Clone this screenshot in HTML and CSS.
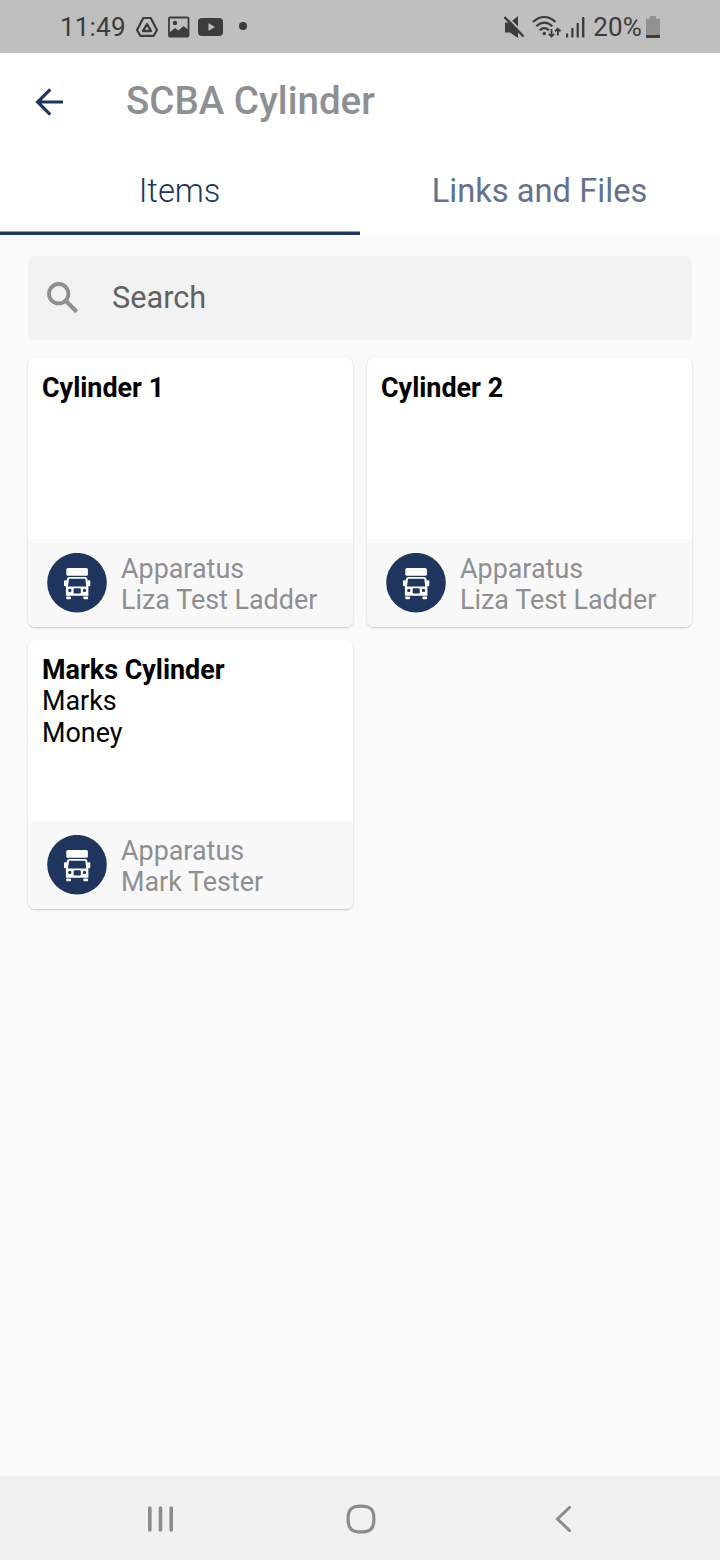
FILE: index.html
```html
<!DOCTYPE html>
<html lang="en">
<head>
  <meta charset="UTF-8" />
  <meta name="viewport" content="width=device-width, initial-scale=1.0" />
  <title>SCBA Cylinder</title>
  <link rel="stylesheet" href="styles.css">
</head>
<body>
  <!-- truck icon shared by the cards -->
  <svg class="defs" width="0" height="0">
    <symbol id="truck" viewBox="0 0 60 60">
      <circle cx="30" cy="29.700" r="29.800" fill="#20355e" />
      <g fill="#fff">
        <rect x="19.300" y="15" width="21.600" height="7.800" rx="1.500" />
        <rect x="17" y="27.200" width="3" height="6" rx="1" />
        <rect x="40.300" y="27.200" width="3" height="6" rx="1" />
        <path fill-rule="evenodd" d="M22.500 23.900h15.300c1.500 0 2.400.7 2.600 2.100l1 8.500v8.200H18.900v-8.200l1-8.500c.2-1.400 1.100-2.100 2.600-2.100zM23 25.700c-.7 0-1 .3-1.100 1l-.9 6.900h18.300l-.9-6.900c-.1-.7-.4-1-1.100-1zM22.800 35.700a1.700 1.700 0 1 0 0 3.400 1.700 1.700 0 0 0 0-3.400zM37.500 35.700a1.700 1.700 0 1 0 0 3.400 1.700 1.700 0 0 0 0-3.400zM27.300 35.200l-.7.7v4l.7.700h5.800l.7-.7v-4l-.7-.7z" />
        <rect x="19.200" y="43.500" width="4.800" height="2.800" rx="1" />
        <rect x="36.300" y="43.500" width="4.800" height="2.800" rx="1" />
      </g>
    </symbol>
  </svg>

  <div class="status-bar">
    <div class="status-left">
      <span class="time">11:49</span>
      <svg class="drive" width="24" height="24" viewBox="0 0 24 24" fill="none" stroke="#3c3c3c" stroke-linejoin="round">
        <path d="M8.300 3h7.400L22 15l-3.300 5.800H5.300L2 15z" stroke-width="2.200" />
        <path d="M12 9l4 7H8z" stroke-width="2.400" />
      </svg>
      <svg class="image" width="22" height="22" viewBox="0 0 22 22">
        <rect x="1" y="1.500" width="19.500" height="19" rx="1" fill="none" stroke="#3c3c3c" stroke-width="1.800" />
        <circle cx="7" cy="7" r="2.200" fill="#3c3c3c" />
        <path d="M2 16l5-4 3.500 2.500 5-4.500 5 4v7H2z" fill="#3c3c3c" />
      </svg>
      <svg class="youtube" width="26" height="20" viewBox="0 0 26 20">
        <rect x="0" y="1" width="25" height="18" rx="4" fill="#3c3c3c" />
        <path d="M10.500 6.300v7.400l6.500-3.700z" fill="#bfbfbf" />
      </svg>
      <span class="dot"></span>
    </div>
    <div class="status-right">
      <svg class="mute" width="22" height="24" viewBox="0 0 22 24">
        <path d="M1 7.500h5l8-6.500v22L6 17.500H1z" fill="#3c3c3c" />
        <path d="M1.500.500L22 21" stroke="#bfbfbf" stroke-width="2" />
        <path d="M.500 2L19.500 21.500" stroke="#3c3c3c" stroke-width="2.400" />
      </svg>
      <svg class="wifi" width="30" height="24" viewBox="0 0 30 24" fill="none" stroke="#3c3c3c" stroke-width="2.200">
        <path d="M1 7C8 .300 16.500.300 23.500 7M4.300 11.300c5.200-4.700 10.800-4.700 16 0M7.700 15.200c3-2.700 6.200-2.700 9.200 0" />
        <circle cx="12.300" cy="18.500" r="1.700" fill="#3c3c3c" stroke="none" />
        <path d="M19.500 14v7.500M16.800 18.800l2.700 2.700 2.700-2.700M25.800 20.500v-6.800M23.100 16.400l2.700-2.700 2.700 2.700" stroke-width="1.800" />
      </svg>
      <svg class="signal" width="20" height="22" viewBox="0 0 20 22" fill="#3c3c3c">
        <rect x="0" y="17.500" width="2.200" height="4" rx=".5" />
        <rect x="5.300" y="12" width="2.200" height="9.500" rx=".5" />
        <rect x="10.600" y="7" width="2.200" height="14.500" rx=".5" />
        <rect x="16" y="1" width="2.400" height="20.500" rx=".5" />
      </svg>
      <span class="battery-text">20%</span>
      <svg class="battery" width="14" height="22" viewBox="0 0 14 22">
        <path d="M4 0h6v2.500h3a1 1 0 0 1 1 1V19H0V3.500a1 1 0 0 1 1-1h3z" fill="#929292" />
        <path d="M0 19h14v2a1 1 0 0 1-1 1H1a1 1 0 0 1-1-1z" fill="#3c3c3c" />
      </svg>
    </div>
  </div>

  <div class="header">
    <svg class="back" width="30" height="30" viewBox="0 0 30 30" fill="none" stroke="#20355e" stroke-width="3.200">
      <path d="M29 15H3.500M16.300 2.300L3.600 15l12.700 12.700" />
    </svg>
    <h1>SCBA Cylinder</h1>
  </div>

  <div class="tabs">
    <div class="tab active"><span>Items</span></div>
    <div class="tab"><span>Links and Files</span></div>
  </div>

  <div class="content">
    <div class="search">
      <svg width="32" height="32" viewBox="0 0 32 32" fill="none" stroke="#8e8f93">
        <circle cx="11.700" cy="11.700" r="9.700" stroke-width="3.800" />
        <path d="M18.700 18.700L29.700 29.700" stroke-width="4.200" />
      </svg>
      <span>Search</span>
    </div>

    <div class="cards">
      <div class="card">
        <div class="card-body">
          <h2>Cylinder 1</h2>
        </div>
        <div class="card-footer">
          <svg width="60" height="60"><use href="#truck" /></svg>
          <div>
            <p>Apparatus</p>
            <p>Liza Test Ladder</p>
          </div>
        </div>
      </div>

      <div class="card">
        <div class="card-body">
          <h2>Cylinder 2</h2>
        </div>
        <div class="card-footer">
          <svg width="60" height="60"><use href="#truck" /></svg>
          <div>
            <p>Apparatus</p>
            <p>Liza Test Ladder</p>
          </div>
        </div>
      </div>

      <div class="card">
        <div class="card-body">
          <h2>Marks Cylinder</h2>
          <p>Marks</p>
          <p>Money</p>
        </div>
        <div class="card-footer">
          <svg width="60" height="60"><use href="#truck" /></svg>
          <div>
            <p>Apparatus</p>
            <p>Mark Tester</p>
          </div>
        </div>
      </div>
    </div>
  </div>

  <div class="nav-bar">
    <svg class="recents" width="28" height="28" viewBox="0 0 28 28" stroke="#8c8c8c" stroke-width="3.600" stroke-linecap="round">
      <path d="M2.800 3v22M13.500 3v22M24.200 3v22" />
    </svg>
    <svg class="home" width="30" height="30" viewBox="0 0 30 30" fill="none" stroke="#8c8c8c" stroke-width="3.200">
      <path d="M15 2.100c9.500 0 12.900 3.400 12.900 12.900S24.500 27.900 15 27.900 2.100 24.500 2.100 15 5.500 2.100 15 2.100z" />
    </svg>
    <svg class="prev" width="18" height="28" viewBox="0 0 18 28" fill="none" stroke="#8c8c8c" stroke-width="3.100" stroke-linecap="round">
      <path d="M14.500 2.500L2.500 14l12 11.500" />
    </svg>
  </div>
</body>
</html>
```
FILE: styles.css
```css
* {
  box-sizing: border-box;
}
body {
  margin: 0;
  height: 1560px;
  display: flex;
  flex-direction: column;
  font-family: Roboto, sans-serif;
  background: #fafafa;
  color: #000;
}
h1, h2, p {
  margin: 0;
}
svg {
  display: block;
  flex: none;
}
.defs {
  position: absolute;
}
.status-bar {
  height: 53px;
  display: flex;
  justify-content: space-between;
  padding: 0 60px;
  background: #bfbfbf;
  color: #3c3c3c;
  font-size: 26px;
}
.status-left, .status-right {
  display: flex;
  align-items: center;
}
.time {
  width: 75px;
  letter-spacing: 0.2px;
}
.image {
  margin-left: 9px;
}
.youtube {
  margin-left: 8px;
}
.dot {
  width: 8px;
  height: 8px;
  margin: 0 0 1px 15px;
  border-radius: 50%;
  background: #3c3c3c;
}
.wifi {
  margin-left: 6px;
}
.signal {
  margin-left: 4px;
}
.battery-text {
  margin: 0 4px 0 7px;
  letter-spacing: 0.2px;
}
.header {
  height: 95px;
  display: flex;
  align-items: center;
  padding-left: 34px;
  background: #fff;
}
.back {
  margin-top: 2px;
}
h1 {
  margin-left: 62px;
  font-size: 38.5px;
  font-weight: 500;
  color: #8e8f93;
}
.tabs {
  height: 87px;
  display: flex;
  background: #fff;
}
.tab {
  flex: 1;
  display: flex;
  align-items: center;
  justify-content: center;
  padding: 1px 1px 0 0;
  border-bottom: 3px solid transparent;
  font-size: 32.7px;
  color: #64728c;
}
.tab.active {
  border-color: #20355e;
  box-shadow: inset 0 -1px 0 rgba(32,53,94,0.5);
  color: #20355e;
  font-weight: 300;
}
.content {
  flex: 1;
  padding: 21px 28px;
}
.search {
  height: 84px;
  display: flex;
  align-items: center;
  gap: 33px;
  padding-left: 19px;
  border-radius: 8px;
  background: #f2f2f2;
  color: #616161;
  font-size: 30.7px;
}
.search span {
  margin-bottom: 2px;
}
.cards {
  display: grid;
  grid-template-columns: 1fr 1fr;
  gap: 13px 14px;
  margin-top: 18px;
}
.card {
  height: 269px;
  display: flex;
  flex-direction: column;
  border-radius: 7px;
  background: #fff;
  box-shadow: 0 1px 2px rgba(0,0,0,0.22);
  overflow: hidden;
  font-size: 26.9px;
  line-height: 31.4px;
}
.card-body {
  flex: 1;
  padding: 15px 14px;
}
.card h2 {
  font-size: 26.9px;
  font-weight: bold;
}
.card-footer {
  height: 88px;
  display: flex;
  align-items: center;
  gap: 14px;
  padding-left: 19px;
  background: #f8f8f8;
  color: #8e8f93;
}
.card-footer div {
  padding-top: 4px;
}
.nav-bar {
  height: 84px;
  display: flex;
  align-items: center;
  padding: 2px 0 0 147px;
  background: #f1f1f1;
}
.home {
  margin-left: 171px;
}
.prev {
  margin-left: 179px;
}
```
